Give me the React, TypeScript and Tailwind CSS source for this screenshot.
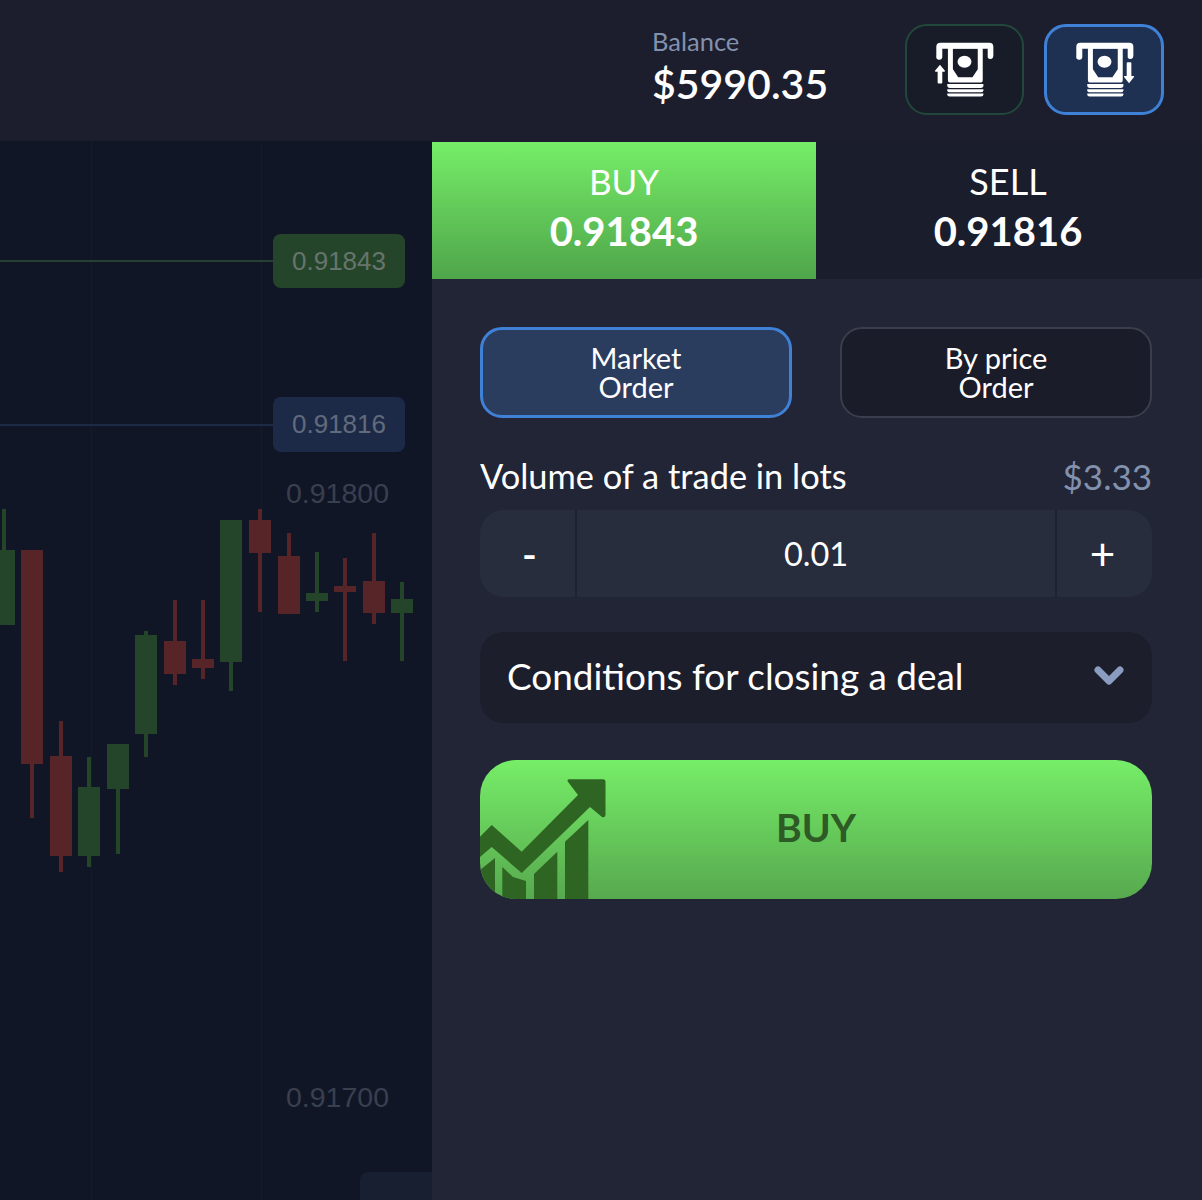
const candles = [
  { x: 4, open: 550, close: 625, top: 509, bottom: 625, up: true },
  { x: 32, open: 550, close: 764, top: 550, bottom: 818, up: false },
  { x: 61, open: 756, close: 856, top: 721, bottom: 872, up: false },
  { x: 89, open: 787, close: 856, top: 757, bottom: 867, up: true },
  { x: 118, open: 744, close: 789, top: 744, bottom: 854, up: true },
  { x: 146, open: 635, close: 734, top: 631, bottom: 757, up: true },
  { x: 175, open: 641, close: 674, top: 600, bottom: 685, up: false },
  { x: 203, open: 659, close: 668, top: 600, bottom: 679, up: false },
  { x: 231, open: 520, close: 662, top: 520, bottom: 691, up: true },
  { x: 260, open: 520, close: 553, top: 509, bottom: 612, up: false },
  { x: 289, open: 556, close: 614, top: 533, bottom: 614, up: false },
  { x: 317, open: 593, close: 601, top: 552, bottom: 612, up: true },
  { x: 345, open: 586, close: 592, top: 558, bottom: 661, up: false },
  { x: 374, open: 581, close: 613, top: 533, bottom: 624, up: false },
  { x: 402, open: 599, close: 613, top: 582, bottom: 661, up: true },
]

function AtmIcon({ direction }: { direction: 'up' | 'down' }) {
  return (
    <svg width="63" height="60" viewBox="130 90 190 180" fill="white">
      <path d="M152 98h148a12 12 0 0 1 12 12v28a9 9 0 0 1-17 4v-26H158v26a9 9 0 0 1-18-4v-28a12 12 0 0 1 12-12z" />
      <path
        fillRule="evenodd"
        d="M175 112h105v98a8 8 0 0 1-8 8h-89a8 8 0 0 1-8-8zM190 115v63l16 24h43l16-24v-63z"
      />
      <ellipse cx="225" cy="155" rx="21" ry="18" />
      <path d="M173 222h109v4a8 8 0 0 1-8 8h-93a8 8 0 0 1-8-8z" />
      <path d="M173 238h109v3a6 6 0 0 1-6 6h-97a6 6 0 0 1-6-6z" />
      <path d="M173 251h109v2a7 7 0 0 1-7 7h-95a7 7 0 0 1-7-7z" />
      {direction === 'up' ? (
        <path d="M151 164l15 18a2 2 0 0 1-2 3h-6v33a3 3 0 0 1-3 3h-8a3 3 0 0 1-3-3v-33h-6a2 2 0 0 1-2-3z" />
      ) : (
        <path d="M292 160a3 3 0 0 1 3-3h8a3 3 0 0 1 3 3v38h6a2 2 0 0 1 2 3l-15 19-15-19a2 2 0 0 1 2-3h6z" />
      )}
    </svg>
  )
}

function GrowthIcon() {
  return (
    <svg width="130" height="139" viewBox="0 0 130 139" fill="#2f6523" className="absolute left-0 top-0">
      <path d="M0 76.7L11.7 65L41.7 91.7L98 35L87.7 21.5Q87 19.3 89 19.3H123Q125.5 19.3 125.5 22V55Q125 58 122 57L110 47L41.7 113L11.7 87L0 97z" />
      <path d="M0 110L15 98V139H0z" />
      <path d="M22.3 107L33 117L46 121V139H22.3z" />
      <path d="M54 114L77.3 91.7V139H54z" />
      <path d="M85 81.7L108.3 60V139H85z" />
    </svg>
  )
}

export default function App() {
  return (
    <div className="flex h-[1200px] w-[1202px] flex-col overflow-hidden bg-[#222536] font-['Lato',sans-serif] text-white">
      <header className="flex h-[141px] shrink-0 items-start justify-end bg-[#1c1e2d] pr-[38px] pt-[24px]">
        <div className="mr-[77px] flex w-[176px] flex-col">
          <span className="-mt-[1px] text-[25.5px] leading-[36px] text-[#8291ad]">Balance</span>
          <span className="text-[41px] font-semibold leading-[49px]">$5990.35</span>
        </div>
        <div className="flex gap-[20px]">
          <button className="flex h-[91px] w-[119px] items-center justify-center rounded-[22px] border-2 border-[#21483a] bg-[#171c28]">
            <AtmIcon direction="up" />
          </button>
          <button className="flex h-[91px] w-[120px] items-center justify-center rounded-[22px] border-[3px] border-[#3f81d6] bg-[#1f3153]">
            <AtmIcon direction="down" />
          </button>
        </div>
      </header>

      <main className="flex flex-1">
        <section className="relative w-[432px] shrink-0 overflow-hidden bg-[#111627] font-['Liberation_Sans',sans-serif]">
          <svg width="432" height="1059" viewBox="0 141 432 1059" className="absolute left-0 top-0">
            <rect x="91" y="141" width="1" height="1059" fill="#151b2c" />
            <rect x="261" y="141" width="1" height="1059" fill="#151b2c" />
            <rect x="0" y="260" width="273" height="2" fill="#253f30" />
            <rect x="0" y="424" width="273" height="2" fill="#1d2a46" />
            {candles.map(c => (
              <g key={c.x} fill={c.up ? '#244529' : '#572427'}>
                <rect x={c.x - 2} y={c.top} width="4" height={c.bottom - c.top} />
                <rect x={c.x - 11} y={c.open} width="22" height={c.close - c.open} />
              </g>
            ))}
          </svg>
          <div className="absolute left-[273px] top-[93px] flex h-[54px] w-[132px] items-center justify-center rounded-[8px] bg-[#244529] text-[26px] text-[#67746c]">
            0.91843
          </div>
          <div className="absolute left-[273px] top-[256px] flex h-[55px] w-[132px] items-center justify-center rounded-[8px] bg-[#1c2a47] text-[26px] text-[#626a7b]">
            0.91816
          </div>
          <span className="absolute left-[286px] top-[335px] text-[28.5px] leading-[34px] text-[#3a3f4e]">0.91800</span>
          <span className="absolute left-[286px] top-[939px] text-[28.5px] leading-[34px] text-[#3a3f4e]">0.91700</span>
          <div className="absolute left-[360px] top-[1031px] h-[28px] w-[72px] rounded-tl-[8px] bg-[#181f30]" />
        </section>

        <section className="flex flex-1 flex-col">
          <div className="flex h-[138px] border-t border-[#1c1e2d] bg-[#1a1d2b]">
            <button className="flex w-[384px] flex-col items-center bg-gradient-to-b from-[#76ee68] to-[#4fa54a] pt-[18px]">
              <span className="text-[35px] leading-[42px] text-white">BUY</span>
              <span className="text-[40px] font-bold leading-[58px]">0.91843</span>
            </button>
            <button className="flex flex-1 flex-col items-center pr-[2px] pt-[18px]">
              <span className="text-[36px] leading-[42px] text-white">SELL</span>
              <span className="text-[40px] font-bold leading-[58px]">0.91816</span>
            </button>
          </div>

          <div className="flex flex-col pl-[48px] pr-[50px] pt-[48px]">
            <div className="flex gap-[48px]">
              <button className="flex h-[91px] w-[312px] flex-col items-center justify-center rounded-[22px] border-[3px] border-[#3f81d6] bg-[#2b3d5f] pb-[2px] text-[29px] leading-[29px]">
                <span>Market</span>
                <span>Order</span>
              </button>
              <button className="flex h-[91px] w-[312px] flex-col items-center justify-center rounded-[22px] border-2 border-[#3a3e4c] bg-[#1a1c29] pb-[2px] text-[29px] leading-[29px]">
                <span>By price</span>
                <span>Order</span>
              </button>
            </div>

            <div className="mt-[40px] flex h-[38px] items-center justify-between pb-[2px]">
              <span className="text-[34.4px]">Volume of a trade in lots</span>
              <span className="text-[35px] text-[#8291ad]">$3.33</span>
            </div>

            <div className="mt-[14px] flex h-[87px] items-stretch rounded-[24px] bg-[#282d3e] text-[32.5px]">
              <button className="flex w-[97px] items-center justify-center border-r-2 border-[#1d2130] pl-[4px] text-[40px] font-semibold">-</button>
              <div className="flex flex-1 items-center justify-center pt-[2px]">0.01</div>
              <button className="flex w-[97px] items-center justify-center border-l-2 border-[#1d2130] pb-[2px] pr-[4px] text-[44px]">+</button>
            </div>

            <div className="mt-[35px] flex h-[91px] items-center justify-between rounded-[24px] bg-[#1c1e2c] pb-[2px] pl-[27px] pr-[27px]">
              <span className="text-[36.9px]">Conditions for closing a deal</span>
              <svg width="32" height="24" viewBox="0 0 32 24" fill="none">
                <path d="M5 5l11 11L27 5" stroke="#8a9cc0" strokeWidth="7" strokeLinejoin="round" strokeLinecap="round" />
              </svg>
            </div>

            <button className="relative mt-[37px] flex h-[139px] items-center justify-center overflow-hidden rounded-[36px] bg-gradient-to-b from-[#76ee68] to-[#57a94e] pb-[5px] text-[39px] font-bold text-[#2d5a25]">
              <GrowthIcon />
              BUY
            </button>
          </div>
        </section>
      </main>
    </div>
  )
}
